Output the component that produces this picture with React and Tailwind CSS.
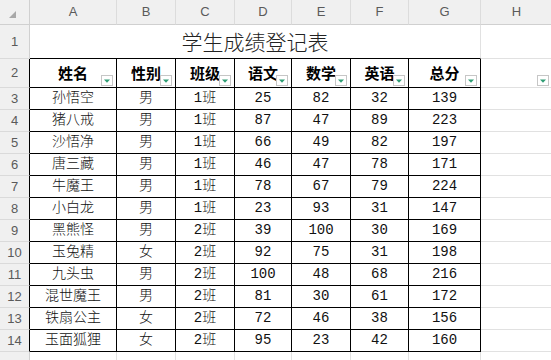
const cols = ["A", "B", "C", "D", "E", "F", "G", "H", ""];
const widths = [
  "w-[87px]",
  "w-[59px]",
  "w-[59px]",
  "w-[57px]",
  "w-[59px]",
  "w-[58px]",
  "w-[72px]",
  "w-[72px]",
  "w-[72px]",
];

const heads = ["姓名", "性别", "班级", "语文", "数学", "英语", "总分"];

const rows = [
  ["孙悟空", "男", "1班", 25, 82, 32, 139],
  ["猪八戒", "男", "1班", 87, 47, 89, 223],
  ["沙悟净", "男", "1班", 66, 49, 82, 197],
  ["唐三藏", "男", "1班", 46, 47, 78, 171],
  ["牛魔王", "男", "1班", 78, 67, 79, 224],
  ["小白龙", "男", "1班", 23, 93, 31, 147],
  ["黑熊怪", "男", "2班", 39, 100, 30, 169],
  ["玉兔精", "女", "2班", 92, 75, 31, 198],
  ["九头虫", "男", "2班", 100, 48, 68, 216],
  ["混世魔王", "男", "2班", 81, 30, 61, 172],
  ["铁扇公主", "女", "2班", 72, 46, 38, 156],
  ["玉面狐狸", "女", "2班", 95, 23, 42, 160],
];

const cellFont = {
  fontFamily: '"Liberation Mono", "Noto Sans CJK SC", monospace',
};

function FilterButton() {
  return (
    <div className="absolute right-[3px] bottom-[1px] w-[12px] h-[11px] bg-white border border-[#c6c6c6] flex items-center justify-center">
      <svg width="6" height="4" viewBox="0 0 6 4">
        <path d="M0 0.5 L6 0.5 L3 3.8 Z" fill="#2f9d74" />
      </svg>
    </div>
  );
}

function RowHead({ n, h, dark }) {
  return (
    <div
      className={`w-[30px] shrink-0 ${h} bg-[#f0f0f0] border-b border-b-[#dadada] border-r ${
        dark ? "border-r-black" : "border-r-[#d0d0d0]"
      } flex items-center justify-center text-[13px] text-[#5a5a5a] font-['Liberation_Sans',sans-serif]`}
    >
      {n}
    </div>
  );
}

export default function App() {
  return (
    <div className="w-[551px] h-[360px] overflow-hidden bg-white">
      {/* column headers */}
      <div className="flex h-[25px]">
        <div className="w-[30px] shrink-0 h-[25px] bg-[#f0f0f0] border-r border-b border-[#d0d0d0] relative">
          <svg className="absolute left-[9px] top-[11px]" width="7" height="7" viewBox="0 0 7 7">
            <path d="M7 0 L7 7 L0 7 Z" fill="#a8a8a8" />
          </svg>
        </div>
        {cols.map((c, i) => (
          <div
            key={i}
            className={`${widths[i]} shrink-0 h-[25px] bg-[#f0f0f0] border-r border-r-[#dcdcdc] border-b border-b-[#d0d0d0] flex items-center justify-center text-[13px] text-[#5a5a5a] font-['Liberation_Sans',sans-serif]`}
          >
            {c}
          </div>
        ))}
      </div>

      {/* row 1 title */}
      <div className="flex h-[34px]">
        <RowHead n={1} h="h-[34px]" />
        <div className="w-[451px] shrink-0 h-[34px] border-r border-r-[#e1e1e1] border-b border-b-black flex items-center justify-center text-[21px] font-light text-[#222] font-['Noto_Sans_CJK_SC',sans-serif]">
          学生成绩登记表
        </div>
        <div className="w-[72px] shrink-0 h-[34px] border-r border-b border-[#e1e1e1]" />
        <div className="w-[72px] shrink-0 h-[34px] border-r border-b border-[#e1e1e1]" />
      </div>

      {/* row 2 headers */}
      <div className="flex h-[29px]">
        <RowHead n={2} h="h-[29px]" dark />
        {heads.map((t, i) => (
          <div
            key={t}
            className={`${widths[i]} shrink-0 h-[29px] relative border-r border-b border-black flex items-center justify-center text-[15px] font-bold text-black font-['Noto_Sans_CJK_SC',sans-serif]`}
          >
            {t}
            <FilterButton />
          </div>
        ))}
        <div className="w-[72px] shrink-0 h-[29px] relative border-r border-b border-[#e1e1e1]">
          <FilterButton />
        </div>
        <div className="w-[72px] shrink-0 h-[29px] border-r border-b border-[#e1e1e1]" />
      </div>

      {/* data rows */}
      {rows.map((r, ri) => (
        <div key={ri} className="flex h-[22px]">
          <RowHead n={ri + 3} h="h-[22px]" dark />
          {r.map((v, ci) => (
            <div
              key={ci}
              style={cellFont}
              className={`${widths[ci]} shrink-0 h-[22px] border-r border-b border-black flex items-center justify-center text-[14px] font-light text-[#111]`}
            >
              {v}
            </div>
          ))}
          <div className="w-[72px] shrink-0 h-[22px] border-r border-b border-[#e1e1e1]" />
          <div className="w-[72px] shrink-0 h-[22px] border-r border-b border-[#e1e1e1]" />
        </div>
      ))}

      {/* row 15, only its top edge is in view */}
      <div className="flex h-[22px]">
        <RowHead n="" h="h-[22px]" />
        {widths.map((w, i) => (
          <div key={i} className={`${w} shrink-0 h-[22px] border-r border-b border-[#e1e1e1]`} />
        ))}
      </div>
    </div>
  );
}
